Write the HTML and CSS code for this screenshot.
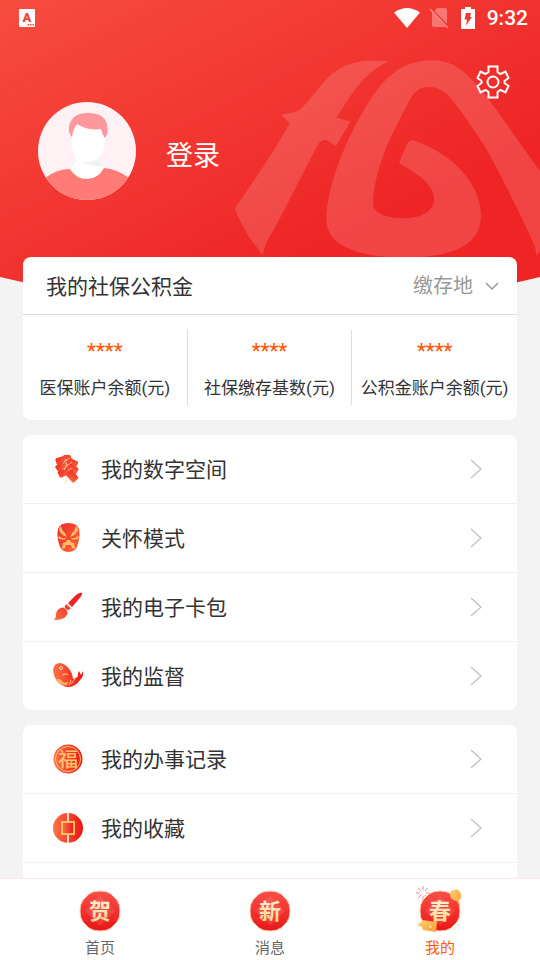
FILE: index.html
```html
<!DOCTYPE html>

<html lang="zh-CN">
	<head>
		<meta charset="utf-8" />
		<meta name="viewport" content="width=device-width, initial-scale=1" />
		<title>我的</title>
		<link rel="stylesheet" href="styles.css">
	</head>

	<body>
		<!-- shared gradients for the icons -->
		<svg class="defs" aria-hidden="true">
			<defs>
				<linearGradient id="red" x1="0" y1="0" x2="1" y2="1">
					<stop offset="0" stop-color="#f02a24" />
					<stop offset="1" stop-color="#fa6a3c" />
				</linearGradient>
				<linearGradient id="redSide" x1="0" y1="0" x2="1" y2="0">
					<stop offset="0" stop-color="#fb7447" />
					<stop offset="1" stop-color="#ee1515" />
				</linearGradient>
				<linearGradient id="redUp" x1="0" y1="1" x2="1" y2="0">
					<stop offset="0" stop-color="#fb7447" />
					<stop offset="1" stop-color="#f03a2a" />
				</linearGradient>
				<linearGradient id="redDown" x1="0" y1="0" x2="0" y2="1">
					<stop offset="0" stop-color="#f9504a" />
					<stop offset="1" stop-color="#e91616" />
				</linearGradient>
				<linearGradient id="gold" x1="0" y1="0" x2="1" y2="1">
					<stop offset="0" stop-color="#ffd36e" />
					<stop offset="1" stop-color="#fb9c35" />
				</linearGradient>
				<linearGradient id="cream" x1="0" y1="0" x2="0" y2="1">
					<stop offset="0" stop-color="#fff0cf" />
					<stop offset="1" stop-color="#ffd591" />
				</linearGradient>
			</defs>
		</svg>

		<header class="hero">
			<svg class="hero-bg" viewBox="0 0 540 312" preserveAspectRatio="none" aria-hidden="true">
				<linearGradient id="heroRed" gradientUnits="userSpaceOnUse" x1="0" y1="0" x2="172" y2="336">
					<stop offset="0" stop-color="#f64d3f" />
					<stop offset="1" stop-color="#ee2425" />
				</linearGradient>
				<path fill="url(#heroRed)" d="M0 0H540V277Q270 342 0 277Z" />
			</svg>
			<svg class="emblem" viewBox="0 0 960 800" aria-hidden="true">
				<path d="M508 184C440 176 385 184 340 218C300 250 275 300 235 332C215 341 200 338 183 344L209 369C165 450 100 545 45 624C60 670 95 725 129 765C130 750 133 740 140 726C195 630 245 525 292 437Q306 412 325 423L341 433Q348 437 353 430L391 364L349 353C390 290 430 215 508 184Z" />
				<path d="M950 767L945 740C900 640 850 540 800 448C760 385 715 320 685 286C650 252 607 252 583 278C560 310 540 360 515 405C480 480 460 550 459 610C459 640 500 654 550 654C600 654 642 635 642 597C642 560 605 528 545 494Q536 489 539 482L564 428Q569 417 582 421C690 458 783 545 783 645C783 735 700 772 550 772C400 772 319 730 319 658C319 570 370 425 450 300C510 205 570 180 640 180C715 182 755 235 800 290C860 370 910 445 962 515V750Z" />
			</svg>

			<div class="status">
				<svg class="ime" width="16" height="18" viewBox="0 0 16 18" aria-hidden="true">
					<rect width="16" height="18" rx="1" fill="#fff" />
					<text x="8" y="13" text-anchor="middle" class="ime-letter">A</text>
					<path d="M8.500 15h1.500v1.500h-1.500zM11 15h1.500v1.500H11zM13.500 15H15v1.500h-1.500z" fill="#f2453b" />
				</svg>
				<div class="status-right">
					<svg width="26" height="22" viewBox="0 0 26 22" aria-hidden="true">
						<path d="M0 5.500Q13-3.500 26 5.500L13 21Z" fill="#fff" />
					</svg>
					<svg width="20" height="22" viewBox="0 0 20 22" aria-hidden="true">
						<path d="M8 1h8q2 0 2 2v14L5.500 4zM3 5L17 20H5q-2 0-2-2z" fill="#fff" opacity=".33" />
						<path d="M1 2L19 21" stroke="#fff" stroke-width="1.500" opacity=".4" />
					</svg>
					<svg class="battery" width="14" height="22" viewBox="0 0 14 22" aria-hidden="true">
						<path d="M4 0h6v2h4v20H0V2h4z" fill="#fff" />
						<path d="M5 6h5L9 10h2L5 18.500 6 12.500H3.500z" fill="#ef3830" />
					</svg>
					<span class="time">9:32</span>
				</div>
			</div>

			<button class="settings" type="button" aria-label="设置">
				<svg width="34" height="34" viewBox="0 0 34 34" aria-hidden="true">
					<path d="M12.500 1.500h9v5.500l3 2 5-2.500 3 6.500-4 3v2l4 3-3 6.500-5-2.500-3 2v5.500h-9V27l-3-2-5 2.500-3-6.500 4-3v-2l-4-3 3-6.500 5 2.500 3-2z" />
					<circle cx="17" cy="17" r="5.500" />
				</svg>
			</button>

			<div class="profile">
				<svg class="avatar" viewBox="0 0 98 98" aria-hidden="true">
					<clipPath id="face"><circle cx="49" cy="49" r="49" /></clipPath>
					<g clip-path="url(#face)">
						<path d="M0 0h98v98H0z" fill="#fff1f4" />
						<path d="M7 76Q19 67 32 67L66 66Q79 67 91 76V98H7Z" fill="#ff7b75" />
						<path d="M38 50h23v6q1 6 5 10Q60 77 49 77T32 67Q38 62 38 56z" fill="#fff" />
						<path d="M42 58Q53 63 61 55Q61 60 64 64Q52 65 42 58Z" fill="#f0f0f0" />
						<path d="M34 34Q34 20 50 20T67 34V40Q65 60 50 60T34 42Z" fill="#fff" />
						<path d="M34 35Q30 31 31 24Q34 11 50 11T69 22Q71 31 67 36Q64 32 63 27Q49 29 39 22Q35 27 34 35Z" fill="#ff979e" />
					</g>
				</svg>
				<a class="login" href="#login">登录</a>
			</div>
		</header>

		<main>
			<section class="card fund">
				<div class="fund-head">
					<h2>我的社保公积金</h2>
					<div class="place">
						<select aria-label="缴存地">
							<option>缴存地</option>
						</select>
						<svg width="14" height="8" viewBox="0 0 14 8" aria-hidden="true"><path d="M1 1l6 6 6-6" /></svg>
					</div>
				</div>
				<dl class="stats">
					<div><dt>医保账户余额(元)</dt><dd>****</dd></div>
					<div><dt>社保缴存基数(元)</dt><dd>****</dd></div>
					<div><dt>公积金账户余额(元)</dt><dd>****</dd></div>
				</dl>
			</section>

			<nav class="card menu">
				<a href="#space">
					<!-- firecrackers -->
					<svg class="icon" viewBox="0 0 30 30" aria-hidden="true">
						<path d="M13 20v9" stroke="#ffd9a0" fill="none" />
						<g fill="url(#red)">
							<rect x="10" y="1" width="8" height="6" rx="2" />
							<rect x="3" y="3" width="11" height="7" rx="1.500" transform="rotate(-18 8 7)" />
							<rect x="14" y="5" width="11" height="7" rx="1.500" transform="rotate(28 19 8)" />
							<rect x="3" y="9" width="11" height="7" rx="1.500" transform="rotate(-38 8 13)" />
							<rect x="13" y="11" width="12" height="7" rx="1.500" transform="rotate(30 19 15)" />
							<rect x="5" y="15" width="12" height="7" rx="1.500" transform="rotate(-25 11 18)" />
							<rect x="13" y="18" width="12" height="8" rx="1.500" transform="rotate(48 19 22)" />
						</g>
						<path d="M13 5l-3 5M13 7l4-3M14 11l-3 5M14 12l5-4M15 17l4-3" stroke="#ffe1b0" stroke-width=".8" fill="none" />
					</svg>
					<span>我的数字空间</span>
					<svg class="arrow" viewBox="0 0 12 20" aria-hidden="true"><path d="M1 1l10 9-10 9" /></svg>
				</a>
				<a href="#care">
					<!-- opera mask -->
					<svg class="icon" viewBox="0 0 30 30" aria-hidden="true">
						<path d="M15.500 0Q24 0 26 6Q27.500 13 25 21Q23 29 15.500 29T6 21Q3.500 13 5 6Q7 0 15.500 0Z" fill="url(#red)" />
						<g fill="#ffbd68">
							<path d="M8 3Q9 8 12 10L13.500 14Q8 12 6 7Q6 5 8 3ZM23 3Q22 8 19 10L17.500 14Q23 12 25 7Q25 5 23 3Z" />
							<path d="M6 13Q9 16 13 15L12 16.500Q8 17 5 15ZM25 13Q22 16 18 15L19 16.500Q23 17 26 15Z" />
							<path d="M14 17h3l1 2 3 1 1 6-3-1-1-3h-5l-1 3-3 1 1-6 3-1z" />
						</g>
					</svg>
					<span>关怀模式</span>
					<svg class="arrow" viewBox="0 0 12 20" aria-hidden="true"><path d="M1 1l10 9-10 9" /></svg>
				</a>
				<a href="#cards">
					<!-- brush -->
					<svg class="icon" viewBox="0 0 30 30" aria-hidden="true">
						<path d="M29 1Q27 0 23 3L15 11 19 15 26 7Q30 2 29 1Z" fill="#ee2424" />
						<path d="M14 12Q11 13 12 16L14 18Q17 18 18 16Z" fill="#f23c2d" />
						<path d="M10 15.500Q14.500 17 14.500 22Q12 28 1 28Q3 26 3 22Q4 16 10 15.500Z" fill="url(#redUp)" />
						<path d="M13.500 12.500l5 4" stroke="#ffd0a0" />
					</svg>
					<span>我的电子卡包</span>
					<svg class="arrow" viewBox="0 0 12 20" aria-hidden="true"><path d="M1 1l10 9-10 9" /></svg>
				</a>
				<a href="#supervise">
					<!-- fish -->
					<svg class="icon" viewBox="0 0 30 30" aria-hidden="true">
						<path d="M0 9Q1 2 7 2Q13 3 17 9Q20 13 20 18Q24 17 25 15L25 12 26 10 28 14 30 10Q31 16 27 19Q22 27 13 26Q1 22 0 9Z" fill="url(#redSide)" />
						<path d="M9 13Q13 11 16 14Q12 13 10 15ZM3 18Q7 17 10 21Q13 23 15 20L14 24Q7 24 3 18Z" fill="#ffb45c" />
						<path d="M18 19l-2 5M22 18l-4 5" stroke="#ffc97c" fill="none" />
						<circle cx="8" cy="7" r="1.500" fill="#f66040" stroke="#ffd5a5" />
					</svg>
					<span>我的监督</span>
					<svg class="arrow" viewBox="0 0 12 20" aria-hidden="true"><path d="M1 1l10 9-10 9" /></svg>
				</a>
			</nav>

			<nav class="card menu more">
				<a href="#records">
					<svg class="icon" viewBox="0 0 30 30" aria-hidden="true">
						<circle cx="15" cy="15" r="14.500" fill="url(#redSide)" />
						<circle cx="15" cy="15" r="12.500" fill="none" stroke="#ffc46b" />
						<text x="15" y="22.500" text-anchor="middle" class="fu">福</text>
					</svg>
					<span>我的办事记录</span>
					<svg class="arrow" viewBox="0 0 12 20" aria-hidden="true"><path d="M1 1l10 9-10 9" /></svg>
				</a>
				<a href="#favorites">
					<!-- coin -->
					<svg class="icon" viewBox="0 0 30 30" aria-hidden="true">
						<circle cx="15" cy="15" r="15" fill="url(#redSide)" />
						<path d="M15 0v30" stroke="#ffe2c0" stroke-width="2" />
						<rect x="9" y="9" width="12" height="12" fill="url(#redSide)" stroke="#ffbd5e" stroke-width="2" />
					</svg>
					<span>我的收藏</span>
					<svg class="arrow" viewBox="0 0 12 20" aria-hidden="true"><path d="M1 1l10 9-10 9" /></svg>
				</a>
			</nav>
		</main>

		<nav class="tabs">
			<a href="#home">
				<svg viewBox="0 0 48 48" aria-hidden="true">
					<path class="badge" d="M24 4Q31 4 35 7L41 13Q44 17 44 24T41 35L35 41Q31 44 24 44T13 41L7 35Q4 31 4 24T7 13L13 7Q17 4 24 4Z" />
					<path class="glow" d="M24 9l15 15-15 15L9 24z" />
					<text x="24" y="32" text-anchor="middle" class="glyph">贺</text>
				</svg>
				<span>首页</span>
			</a>
			<a href="#news">
				<svg viewBox="0 0 48 48" aria-hidden="true">
					<path class="badge" d="M24 4Q31 4 35 7L41 13Q44 17 44 24T41 35L35 41Q31 44 24 44T13 41L7 35Q4 31 4 24T7 13L13 7Q17 4 24 4Z" />
					<path class="glow" d="M24 9l15 15-15 15L9 24z" />
					<text x="24" y="32" text-anchor="middle" class="glyph">新</text>
				</svg>
				<span>消息</span>
			</a>
			<a class="active" href="#mine">
				<svg viewBox="0 0 48 48" aria-hidden="true">
					<g class="spark">
						<path d="M7-1v4M7 9v4M0 6h4M10 6h4M2 1l3 3M12 1L9 4M2 11l3-3M12 11L9 8" />
						<path d="M39 33v3M39 40v3M34 38h3M41 38h3M36 35l1 1M42 41l1 1" opacity=".5" />
					</g>
					<path class="badge" d="M24 4Q31 4 35 7L41 13Q44 17 44 24T41 35L35 41Q31 44 24 44T13 41L7 35Q4 31 4 24T7 13L13 7Q17 4 24 4Z" />
					<path class="glow" d="M24 9l15 15-15 15L9 24z" />
					<text x="24" y="32" text-anchor="middle" class="glyph">春</text>
					<path d="M34 7Q34 3 38 3Q42 1 44 5Q47 10 43 13L44 19L41 14Q34 13 34 7Z" fill="url(#gold)" />
					<path d="M0 35l5 1 1-3 15 2-1 10-13-2-1-3-5-2 3-1z" fill="url(#gold)" />
					<path d="M14 38l1 2M13 40h3" stroke="#fff0c0" fill="none" />
				</svg>
				<span>我的</span>
			</a>
		</nav>
	</body>

</html>
```
FILE: styles.css
```css
*{
	box-sizing: border-box;
}

body{
	display: flex;
	flex-direction: column;
	height: 100vh;
	margin: 0;
	overflow: hidden;
	background-color: #f3f3f3;
	color: #333;
	font-family: Roboto, "Noto Sans CJK SC", sans-serif;
}

a{
	color: inherit;
	text-decoration: none;
}

.defs{
	position: absolute;
	width: 0;
	height: 0;
}

/* red header */
.hero{
	position: relative;
	flex: none;
	padding-bottom: 57px;
}

.hero-bg{
	position: absolute;
	top: 0;
	left: 0;
	width: 100%;
	height: 312px;
}

.emblem{
	position: absolute;
	top: 0;
	right: 0;
	height: 267px;
	width: 320px;
	fill: #fff;
	fill-opacity: .15;
}

.status{
	position: relative;
	display: flex;
	justify-content: space-between;
	align-items: center;
	height: 36px;
	padding: 0 12px 0 19px;
}

.status-right{
	display: flex;
	align-items: center;
	gap: 9px;
}

.battery{
	margin: 0 3px;
}

.time{
	color: #fff;
	font-size: 21px;
	font-weight: 500;
	line-height: 24px;
}

.ime-letter{
	fill: #f2453b;
	font-size: 13px;
	font-weight: 900;
}

.settings{
	position: absolute;
	top: 65px;
	right: 30px;
	padding: 0;
	border: 0;
	background: none;
	line-height: 0;
	cursor: pointer;
}

.settings svg{
	fill: none;
	stroke: #fff;
	stroke-width: 2;
}

.profile{
	position: relative;
	display: flex;
	align-items: center;
	gap: 30px;
	margin-top: 66px;
	padding-left: 38px;
}

.avatar{
	width: 98px;
	height: 98px;
}

.login{
	padding-top: 4px;
	color: #fff;
	font-size: 27px;
}

/* cards */
main{
	position: relative;
	display: flex;
	flex: 1;
	flex-direction: column;
	gap: 15px;
	min-height: 0;
	padding: 0 23px;
	overflow: hidden;
}

.card{
	flex: none;
	border-radius: 8px;
	background-color: #fff;
}

.fund-head{
	display: flex;
	justify-content: space-between;
	align-items: center;
	height: 58px;
	padding: 0 18px 0 23px;
	border-bottom: 1px solid #ddd;
}

h2{
	margin: 0;
	padding-bottom: 2px;
	font-size: 21px;
	font-weight: 400;
}

.place{
	display: flex;
	align-items: center;
	gap: 12px;
}

.place select{
	padding: 0;
	border: 0;
	appearance: none;
	background: none;
	color: #999;
	font-family: inherit;
	font-size: 20px;
}

.place svg,
.arrow{
	fill: none;
	stroke: #999;
	stroke-width: 1.5;
}

.stats{
	display: grid;
	grid-template-columns: repeat(3, 1fr);
	margin: 0;
	padding: 15px 0;
}

.stats div{
	display: flex;
	flex-direction: column-reverse;
	justify-content: flex-end;
	gap: 12px;
	height: 75px;
	padding-top: 9px;
	border-right: 1px solid #ddd;
	text-align: center;
	white-space: nowrap;
}

.stats div:last-child{
	border-right: 0;
}

.stats dt{
	font-size: 17px;
	line-height: 26px;
}

.stats dd{
	margin: 0;
	color: #ff5a0a;
	font-size: 20px;
	font-weight: 500;
	line-height: 24px;
}

.menu a{
	display: flex;
	align-items: center;
	gap: 18px;
	height: 69px;
	padding: 0 35px 0 30px;
	border-bottom: 1px solid #f0f0f0;
	font-size: 21px;
}

.menu:not(.more) a:last-child{
	height: 68px;
	border-bottom: 0;
}

.menu span{
	flex: 1;
	padding-bottom: 2px;
}

.more{
	flex: 1 0 auto;
	border-radius: 8px 8px 0 0;
}

.icon{
	width: 30px;
	height: 30px;
}

.fu{
	fill: #ffc46b;
	font-size: 20px;
	font-weight: 500;
}

.arrow{
	width: 12px;
	height: 20px;
	stroke: #c4c4c4;
}

/* bottom bar */
.tabs{
	position: relative;
	display: grid;
	flex: none;
	grid-template-columns: repeat(3, 1fr);
	height: 82px;
	padding: 8px 15px 0;
	border-top: 1px solid #ffe6e9;
	background-color: #fff;
}

.tabs a{
	display: flex;
	flex-direction: column;
	align-items: center;
	gap: 3px;
	color: #666;
	font-size: 15px;
	line-height: 20px;
}

.tabs svg{
	width: 48px;
	height: 48px;
	overflow: visible;
}

.tabs .active{
	color: #ff5a0a;
}

.badge{
	fill: url(#redDown);
	stroke: #ffc9a8;
	stroke-width: 1;
}

.glow{
	fill: #fff;
	fill-opacity: .1;
}

.glyph{
	fill: url(#cream);
	font-family: "Liberation Serif", "Noto Sans CJK SC", serif;
	font-size: 22px;
	font-weight: 700;
}

.spark{
	fill: none;
	stroke: #ff8c8c;
	stroke-width: 1;
}
```
